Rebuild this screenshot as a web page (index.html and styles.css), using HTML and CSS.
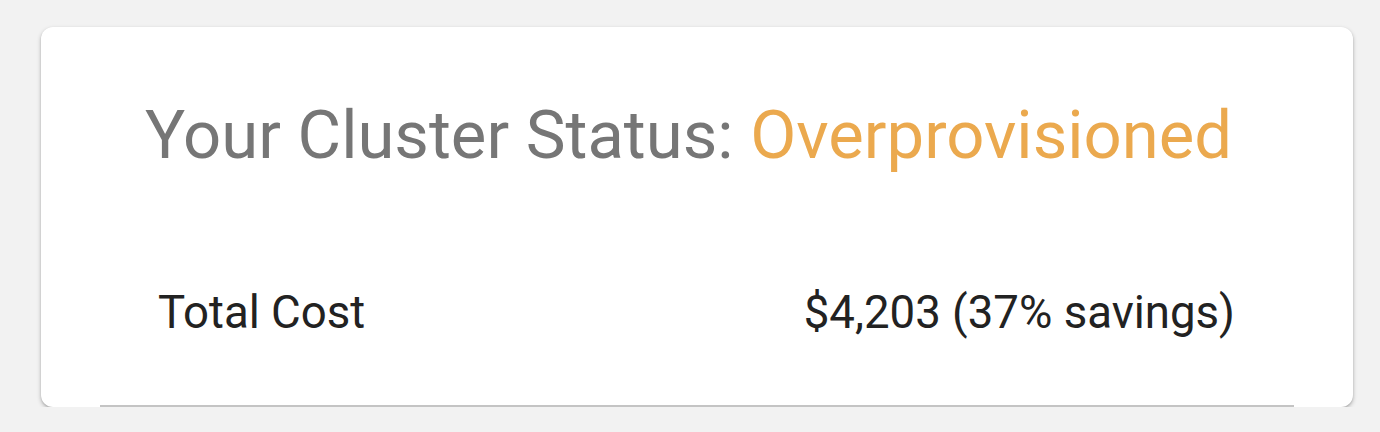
FILE: index.html
```html
<!DOCTYPE html>
<html>
<head>
<meta charset="utf-8">
<link rel="stylesheet" href="styles.css">
</head>
<body>
<div class="card">
  <h1 class="title">Your Cluster Status: <span class="status">Overprovisioned</span></h1>
  <div class="table">
    <div class="row">
      <span class="label">Total Cost</span>
      <span class="value">$4,203 (37% savings)</span>
    </div>
  </div>
</div>
</body>
</html>
```

FILE: styles.css
```css
html, body {
  margin: 0;
  padding: 0;
  background: #f2f2f2;
  font-family: Roboto, "Liberation Sans", sans-serif;
}
body {
  padding: 27px 27px 0 41px;
}
.card {
  width: 1312px;
  height: 380px;
  box-sizing: border-box;
  background: #fff;
  border-radius: 12px;
  box-shadow: 0 2px 4px rgba(0,0,0,0.25), 0 1px 2px rgba(0,0,0,0.12);
  overflow: hidden;
  display: flex;
  flex-direction: column;
  padding: 0 59px;
}
.title {
  margin: 0;
  padding: 58px 17px 0 0;
  text-align: center;
  font-weight: 400;
  font-size: 67px;
  line-height: 100px;
  color: #767676;
}
.status {
  color: #eba94e;
}
.table {
  margin-top: auto;
  border-bottom: 3px solid #c4c4c4;
  margin-bottom: -1px;
}
.row {
  display: flex;
  justify-content: space-between;
  padding: 0 59px 66px 58px;
  font-size: 45.6px;
  color: #222;
}
```
